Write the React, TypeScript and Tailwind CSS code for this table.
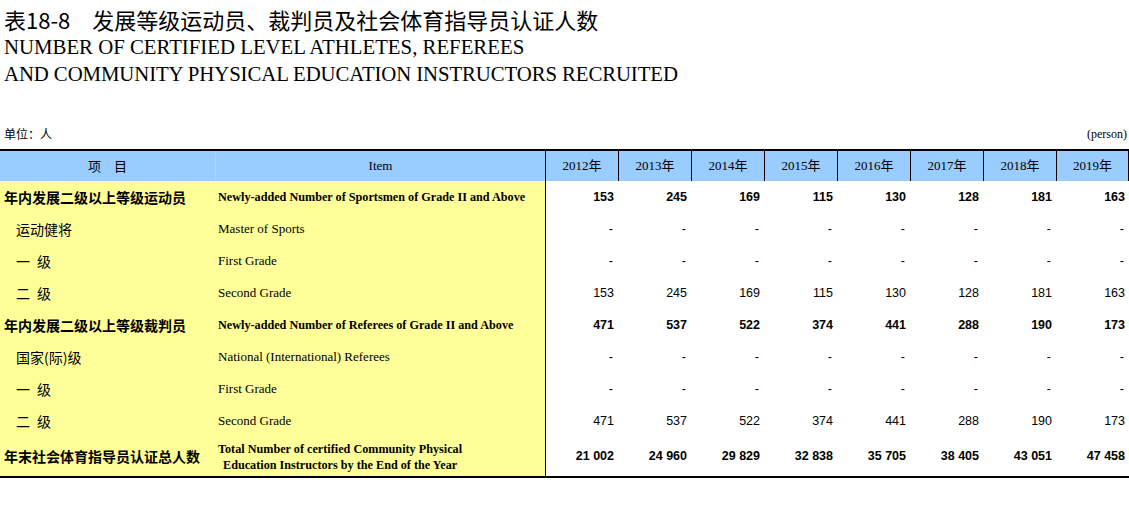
import React from "react";

const dashes = ["-", "-", "-", "-", "-", "-", "-", "-"];
const years = ["2012年", "2013年", "2014年", "2015年", "2016年", "2017年", "2018年", "2019年"];

type Row = { zh: string[]; en: string; bold?: boolean; vals: string[] };

const rows: Row[] = [
  { zh: ["年内发展二级以上等级运动员"], en: "Newly-added Number of Sportsmen of Grade II and Above", bold: true, vals: ["153", "245", "169", "115", "130", "128", "181", "163"] },
  { zh: ["运动健将"], en: "Master of Sports", vals: dashes },
  { zh: ["一", "级"], en: "First Grade", vals: dashes },
  { zh: ["二", "级"], en: "Second Grade", vals: ["153", "245", "169", "115", "130", "128", "181", "163"] },
  { zh: ["年内发展二级以上等级裁判员"], en: "Newly-added Number of Referees of Grade II and Above", bold: true, vals: ["471", "537", "522", "374", "441", "288", "190", "173"] },
  { zh: ["国家(际)级"], en: "National (International) Referees", vals: dashes },
  { zh: ["一", "级"], en: "First Grade", vals: dashes },
  { zh: ["二", "级"], en: "Second Grade", vals: ["471", "537", "522", "374", "441", "288", "190", "173"] },
];

const last = ["21 002", "24 960", "29 829", "32 838", "35 705", "38 405", "43 051", "47 458"];

function ValCells({ vals, bold }: { vals: string[]; bold?: boolean }) {
  return (
    <>
      {vals.map((v, i) => (
        <div
          key={i}
          className={
            "flex items-center justify-end bg-white font-['Liberation_Sans',Arial,sans-serif] text-[12.5px] text-black " +
            (i === 0 ? "border-l border-black " : "") +
            (v === "-" ? "pr-[5px] " : "pr-[4px] ") +
            (bold ? "font-bold" : "")
          }
        >
          {v}
        </div>
      ))}
    </>
  );
}

export default function App() {
  return (
    <div className="w-[1129px] h-[509px] bg-white text-black overflow-hidden">
      <div className="pt-[5px] pl-[4px]">
        <div className="flex text-[22px] leading-[28px] font-['Noto_Sans_CJK_SC',sans-serif]">
          <span>表18-8</span>
          <span className="ml-[22px]">发展等级运动员、裁判员及社会体育指导员认证人数</span>
        </div>
        <div className="text-[20.8px] leading-[27px] tracking-[0px] font-['Liberation_Serif',serif]">
          NUMBER OF CERTIFIED LEVEL ATHLETES, REFEREES
        </div>
        <div className="text-[20.8px] leading-[27px] tracking-[-0.1px] font-['Liberation_Serif',serif]">
          AND COMMUNITY PHYSICAL EDUCATION INSTRUCTORS RECRUITED
        </div>
      </div>
      <div className="mt-[39px] flex items-center justify-between h-[16px] pl-[4px] pr-[2px]">
        <span className="text-[12px] font-['Noto_Sans_CJK_SC',sans-serif]">单位：人</span>
        <span className="text-[12px] font-['Liberation_Serif',serif]">(person)</span>
      </div>
      <div className="mt-[7px] w-[1129px] border-t-2 border-b-2 border-black">
        <div className="grid grid-cols-[215px_330px_repeat(8,73px)] h-[30px] bg-[#99ccff]">
          <div className="flex items-center justify-center gap-[13px] text-[13px] font-['Noto_Sans_CJK_SC',sans-serif]">
            <span>项</span>
            <span>目</span>
          </div>
          <div className="flex items-center justify-center text-[13px] border-l border-[#b9d3ea] font-['Liberation_Serif',serif]">
            Item
          </div>
          {years.map((y, i) => (
            <div
              key={y}
              className={
                "flex items-center justify-center text-[13px] border-l border-black font-['Liberation_Serif','Noto_Sans_CJK_SC',serif] " +
                (i === 7 ? "border-r" : "")
              }
            >
              {y}
            </div>
          ))}
        </div>
        {rows.map((r, idx) => (
          <div key={idx} className="grid grid-cols-[215px_330px_repeat(8,73px)] h-[32px]">
            <div
              className={
                "flex items-center gap-[7px] bg-[#ffff99] text-[14px] whitespace-nowrap font-['Noto_Sans_CJK_SC',sans-serif] " +
                (r.bold ? "pl-[4px] font-bold" : "pl-[16px]")
              }
            >
              {r.zh.map((z, k) => (
                <span key={k}>{z}</span>
              ))}
            </div>
            <div
              className={
                "flex items-center bg-[#ffff99] pl-[3px] whitespace-nowrap font-['Liberation_Serif',serif] " +
                (r.bold ? "font-bold text-[12.2px]" : "text-[13px]")
              }
            >
              {r.en}
            </div>
            <ValCells vals={r.vals} bold={r.bold} />
          </div>
        ))}
        <div className="grid grid-cols-[215px_330px_repeat(8,73px)] h-[39px]">
          <div className="flex items-center bg-[#ffff99] pl-[4px] text-[14px] font-bold whitespace-nowrap font-['Noto_Sans_CJK_SC',sans-serif]">
            年末社会体育指导员认证总人数
          </div>
          <div className="flex flex-col justify-center bg-[#ffff99] pl-[3px] text-[12.2px] font-bold leading-[16px] whitespace-nowrap font-['Liberation_Serif',serif]">
            <span>Total Number of certified Community Physical</span>
            <span className="pl-[5px]">Education Instructors by the End of the Year</span>
          </div>
          <ValCells vals={last} bold />
        </div>
      </div>
    </div>
  );
}
